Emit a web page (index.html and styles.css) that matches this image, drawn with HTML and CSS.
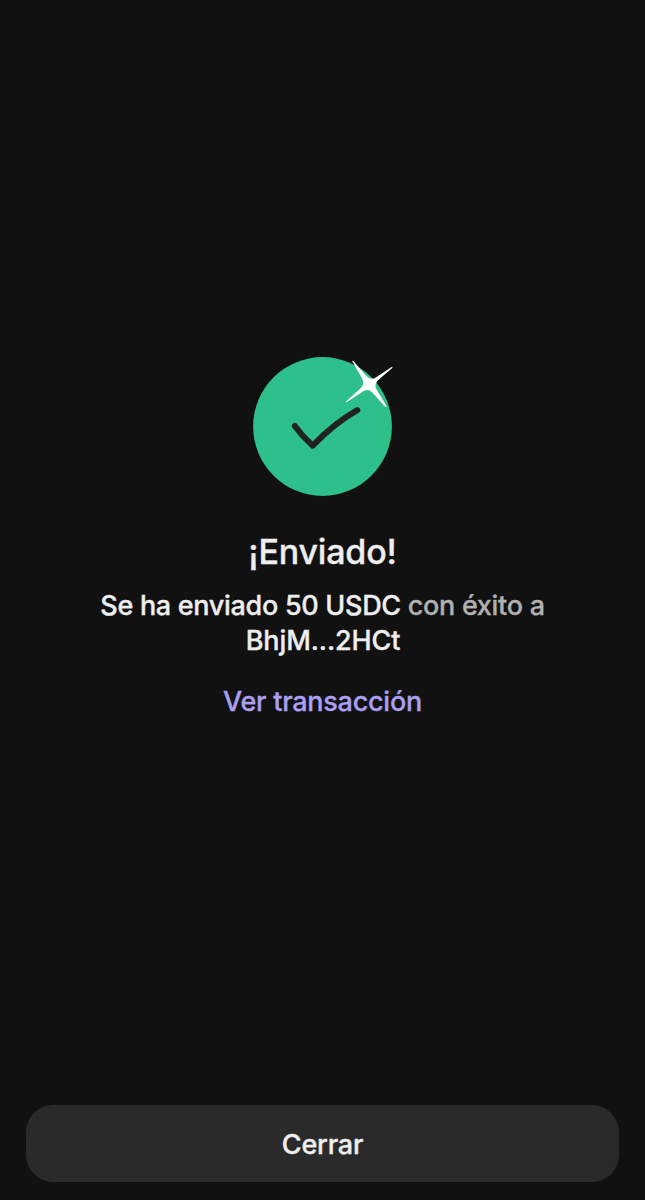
FILE: index.html
```html
<!DOCTYPE html>
<html lang="es">
  <head>
    <meta charset="UTF-8" />
    <meta name="viewport" content="width=device-width, initial-scale=1.0" />
    <title>Enviado</title>
    <link rel="stylesheet" href="styles.css">
  </head>
  <body>
    <div class="screen">
      <div class="content">
        <svg class="success-icon" viewBox="0 0 139 139">
          <circle cx="69.5" cy="69.5" r="69.4" fill="#2ec08b" />
          <path class="check" d="M41.8 69 Q49.5 79.5 59.7 88.7 Q81 66.5 104.3 53.2" />
          <path
            class="spark"
            d="M99.1 4 Q99.8 3.4 100.8 4.4 L113.6 19.2 Q118.3 23.6 122.8 20.6 L138.6 9.9 Q140.2 9.6 139.2 10.9 L125 23.2 Q120.9 27.6 123.4 32.2 L133.6 49 Q133.6 50.6 132.2 49.7 L119 35.3 Q115.3 31.2 110.3 34.2 L94 44.9 Q92.3 45.3 93.4 43.9 L107.4 31.5 Q111.9 27.2 109.1 21.6 Z"
          />
        </svg>
        <h1 class="title">¡Enviado!</h1>
        <p class="message">
          <span class="strong">Se ha enviado 50 USDC</span> con éxito a
          <span class="strong address">BhjM...2HCt</span>
        </p>
        <a class="link" href="#">Ver transacción</a>
      </div>
      <button class="close">Cerrar</button>
    </div>
  </body>
</html>
```

FILE: styles.css
```css
* {
  margin: 0;
  padding: 0;
  box-sizing: border-box;
}
body {
  background-color: #111111;
  color: #eeeeee;
  font-family: Inter, "Liberation Sans", sans-serif;
  font-weight: 500;
  -webkit-text-stroke: 0.35px;
}
.screen {
  display: flex;
  flex-direction: column;
  height: 1200px;
  padding: 357px 26px 18px;
}
.content {
  flex: 1;
  display: flex;
  flex-direction: column;
  align-items: center;
  text-align: center;
}
.success-icon {
  width: 139px;
  height: 139px;
  overflow: visible;
}
.check {
  fill: none;
  stroke: #1f2322;
  stroke-width: 6;
  stroke-linecap: round;
  stroke-linejoin: round;
}
.spark {
  fill: #fffffb;
}
.title {
  margin-top: 35px;
  font-size: 34px;
  font-weight: 500;
  letter-spacing: -0.2px;
  line-height: 42px;
}
.message {
  margin-top: 15px;
  color: #b0b0b0;
  font-size: 27px;
  letter-spacing: -0.3px;
  line-height: 35px;
}
.strong {
  color: #eeeeee;
}
.address {
  display: block;
  padding-left: 1px;
  letter-spacing: -0.1px;
}
.link {
  margin-top: 26px;
  color: #ab9ff2;
  font-size: 27px;
  letter-spacing: -0.25px;
  line-height: 35px;
  text-decoration: none;
}
.close {
  height: 77px;
  padding-top: 2px;
  border: none;
  border-radius: 27px;
  background-color: #2a2a2a;
  color: #eeeeee;
  font: inherit;
  font-size: 27px;
  letter-spacing: -0.2px;
}
```
